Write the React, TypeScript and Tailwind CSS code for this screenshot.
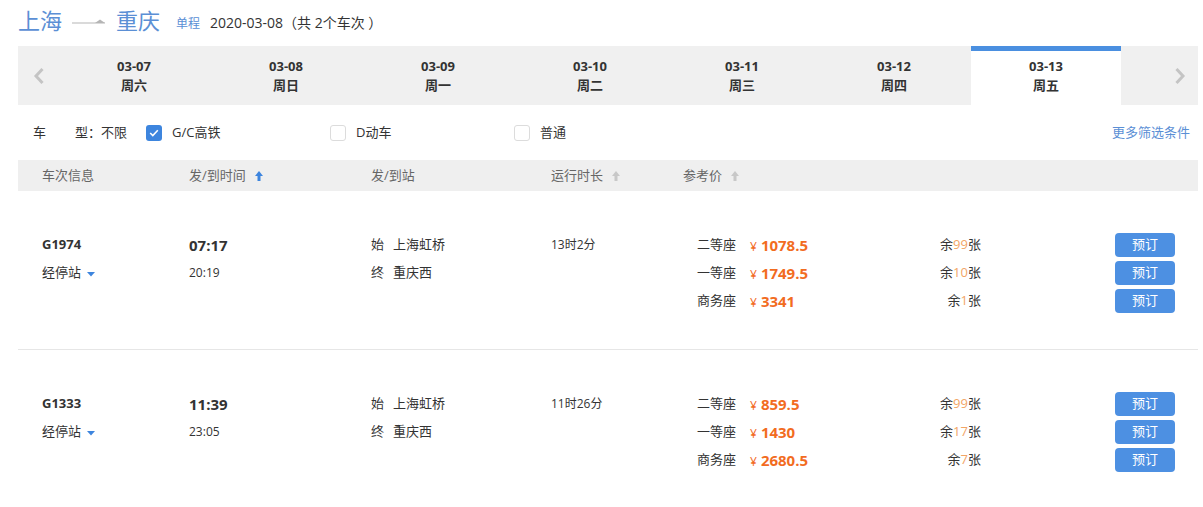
import React from "react";

const FONT = { fontFamily: '"Open Sans", "Noto Sans CJK SC", sans-serif' };

const dates = [
  ["03-07", "周六"],
  ["03-08", "周日"],
  ["03-09", "周一"],
  ["03-10", "周二"],
  ["03-11", "周三"],
  ["03-12", "周四"],
  ["03-13", "周五"],
];

type Seat = { name: string; price: string; left: string };
type Train = {
  no: string;
  dep: string;
  arr: string;
  from: string;
  to: string;
  dur: string;
  seats: Seat[];
};

const trains: Train[] = [
  {
    no: "G1974",
    dep: "07:17",
    arr: "20:19",
    from: "上海虹桥",
    to: "重庆西",
    dur: "13时2分",
    seats: [
      { name: "二等座", price: "1078.5", left: "99" },
      { name: "一等座", price: "1749.5", left: "10" },
      { name: "商务座", price: "3341", left: "1" },
    ],
  },
  {
    no: "G1333",
    dep: "11:39",
    arr: "23:05",
    from: "上海虹桥",
    to: "重庆西",
    dur: "11时26分",
    seats: [
      { name: "二等座", price: "859.5", left: "99" },
      { name: "一等座", price: "1430", left: "17" },
      { name: "商务座", price: "2680.5", left: "7" },
    ],
  },
];

function SortArrow({ active }: { active?: boolean }) {
  const c = active ? "#3d85de" : "#c8c8c8";
  return (
    <svg width="8" height="12" viewBox="0 0 8 12" className="ml-[9px]">
      <polygon points="4,1 8,6 0,6" fill={c} />
      <rect x="2.5" y="6" width="3" height="5" fill={c} />
    </svg>
  );
}

function Checkbox({ checked }: { checked?: boolean }) {
  if (checked)
    return (
      <span className="w-[16px] h-[16px] rounded-[3px] bg-[#3d85de] flex items-center justify-center">
        <svg width="10" height="8" viewBox="0 0 10 8">
          <polyline points="1.2,4 3.8,6.5 8.8,1.3" fill="none" stroke="#fff" strokeWidth="1.6" />
        </svg>
      </span>
    );
  return <span className="w-[16px] h-[16px] rounded-[3px] border border-[#dcdcdc] bg-white" />;
}

export default function App() {
  return (
    <div className="w-[1203px] h-[507px] bg-white overflow-hidden text-[#333]" style={FONT}>
      {/* Title */}
      <div className="h-[46px] pl-[18px] flex items-start pt-[5px]">
        <span className="text-[22px] leading-[30px] text-[#5b8fd5]">上海</span>
        <svg width="34" height="10" viewBox="0 0 34 10" className="ml-[10px] mt-[11px]">
          <line x1="0" y1="7" x2="33" y2="7" stroke="#b5b5b5" strokeWidth="1" />
          <polygon points="23,7 28,3.5 33,7" fill="#b5b5b5" />
        </svg>
        <span className="ml-[10px] text-[22px] leading-[30px] text-[#5b8fd5]">重庆</span>
        <span className="ml-[16px] mt-[10px] text-[12px] leading-[18px] text-[#5b8fd5]">单程</span>
        <span className="ml-[10px] mt-[8px] text-[14px] leading-[20px] text-[#333]">2020-03-08（共 2个车次 ）</span>
      </div>

      {/* Date bar */}
      <div className="ml-[18px] w-[1180px] h-[59px] bg-[#f0f0f0] flex">
        <div className="w-[41px] flex items-center justify-center">
          <svg width="12" height="18" viewBox="0 0 12 18">
            <polyline points="9.5,2 3,9 9.5,16" fill="none" stroke="#c4c4c4" strokeWidth="3" />
          </svg>
        </div>
        {dates.map(([d, w], i) => {
          const active = i === 6;
          return (
            <div key={d} className="w-[152px] h-full">
              <div
                className={
                  "relative h-full w-[150px] flex flex-col items-center justify-center text-[13px] leading-[19px] font-bold text-[#333] " +
                  (active ? "bg-white" : "")
                }
              >
                {active && <div className="absolute left-0 top-0 w-full h-[5px] bg-[#4a8fe0]" />}
                <span>{d}</span>
                <span>{w}</span>
              </div>
            </div>
          );
        })}
        <div className="flex-1 flex items-center justify-end pr-[12px]">
          <svg width="12" height="18" viewBox="0 0 12 18">
            <polyline points="2.5,2 9,9 2.5,16" fill="none" stroke="#c4c4c4" strokeWidth="3" />
          </svg>
        </div>
      </div>

      {/* Filter row */}
      <div className="ml-[18px] w-[1172px] h-[55px] flex items-center text-[13px]">
        <span className="ml-[15px] w-[42px]">车</span>
        <span className="w-[71px]">型：不限</span>
        <div className="w-[184px] flex items-center">
          <Checkbox checked />
          <span className="ml-[10px]">G/C高铁</span>
        </div>
        <div className="w-[184px] flex items-center">
          <Checkbox />
          <span className="ml-[10px]">D动车</span>
        </div>
        <div className="w-[184px] flex items-center">
          <Checkbox />
          <span className="ml-[10px]">普通</span>
        </div>
        <span className="ml-auto text-[#5b8fd5]">更多筛选条件</span>
      </div>

      {/* Table header */}
      <div className="ml-[18px] w-[1180px] h-[31px] bg-[#efefef] flex items-center text-[13px] text-[#666]">
        <span className="ml-[24px] w-[147px]">车次信息</span>
        <span className="w-[182px] flex items-center">
          发/到时间
          <SortArrow active />
        </span>
        <span className="w-[180px]">发/到站</span>
        <span className="w-[132px] flex items-center">
          运行时长
          <SortArrow />
        </span>
        <span className="flex items-center">
          参考价
          <SortArrow />
        </span>
      </div>

      {/* Rows */}
      {trains.map((t) => (
        <div key={t.no} className="ml-[18px] w-[1180px] h-[159px] border-b border-[#e6e6e6] pt-[40px] flex">
          <div className="ml-[24px] w-[147px] flex flex-col">
            <span className="h-[28px] flex items-center text-[13px] font-bold">{t.no}</span>
            <span className="h-[28px] flex items-center text-[13px]">
              经停站
              <svg width="8" height="5" viewBox="0 0 8 5" className="ml-[6px] mt-[2px]">
                <polygon points="0,0 8,0 4,4.5" fill="#3d85de" />
              </svg>
            </span>
          </div>
          <div className="w-[182px] flex flex-col">
            <span className="h-[28px] flex items-center text-[15px] font-bold">{t.dep}</span>
            <span className="h-[28px] flex items-center text-[12px]">{t.arr}</span>
          </div>
          <div className="w-[180px] flex flex-col text-[13px]">
            <span className="h-[28px] flex items-center">
              始<span className="ml-[9px]">{t.from}</span>
            </span>
            <span className="h-[28px] flex items-center">
              终<span className="ml-[9px]">{t.to}</span>
            </span>
          </div>
          <div className="w-[132px] flex flex-col">
            <span className="h-[28px] flex items-center text-[12px]">{t.dur}</span>
          </div>
          <div className="flex flex-col">
            {t.seats.map((s) => (
              <div key={s.name} className="h-[28px] flex items-center">
                <span className="ml-[14px] w-[53px] text-[13px]">{s.name}</span>
                <div className="w-[231px] flex items-center justify-between">
                  <span className="flex items-baseline text-[#f26c1f]">
                    <span className="text-[12px]">¥</span>
                    <span className="ml-[4px] text-[15px] font-bold">{s.price}</span>
                  </span>
                  <span className="text-[13px]">
                    余<span className="text-[#f2a566]">{s.left}</span>张
                  </span>
                </div>
                <button className="ml-[134px] w-[60px] h-[24px] rounded-[4px] bg-[#4d90e2] text-white text-[13px] flex items-center justify-center">
                  预订
                </button>
              </div>
            ))}
          </div>
        </div>
      ))}
    </div>
  );
}
